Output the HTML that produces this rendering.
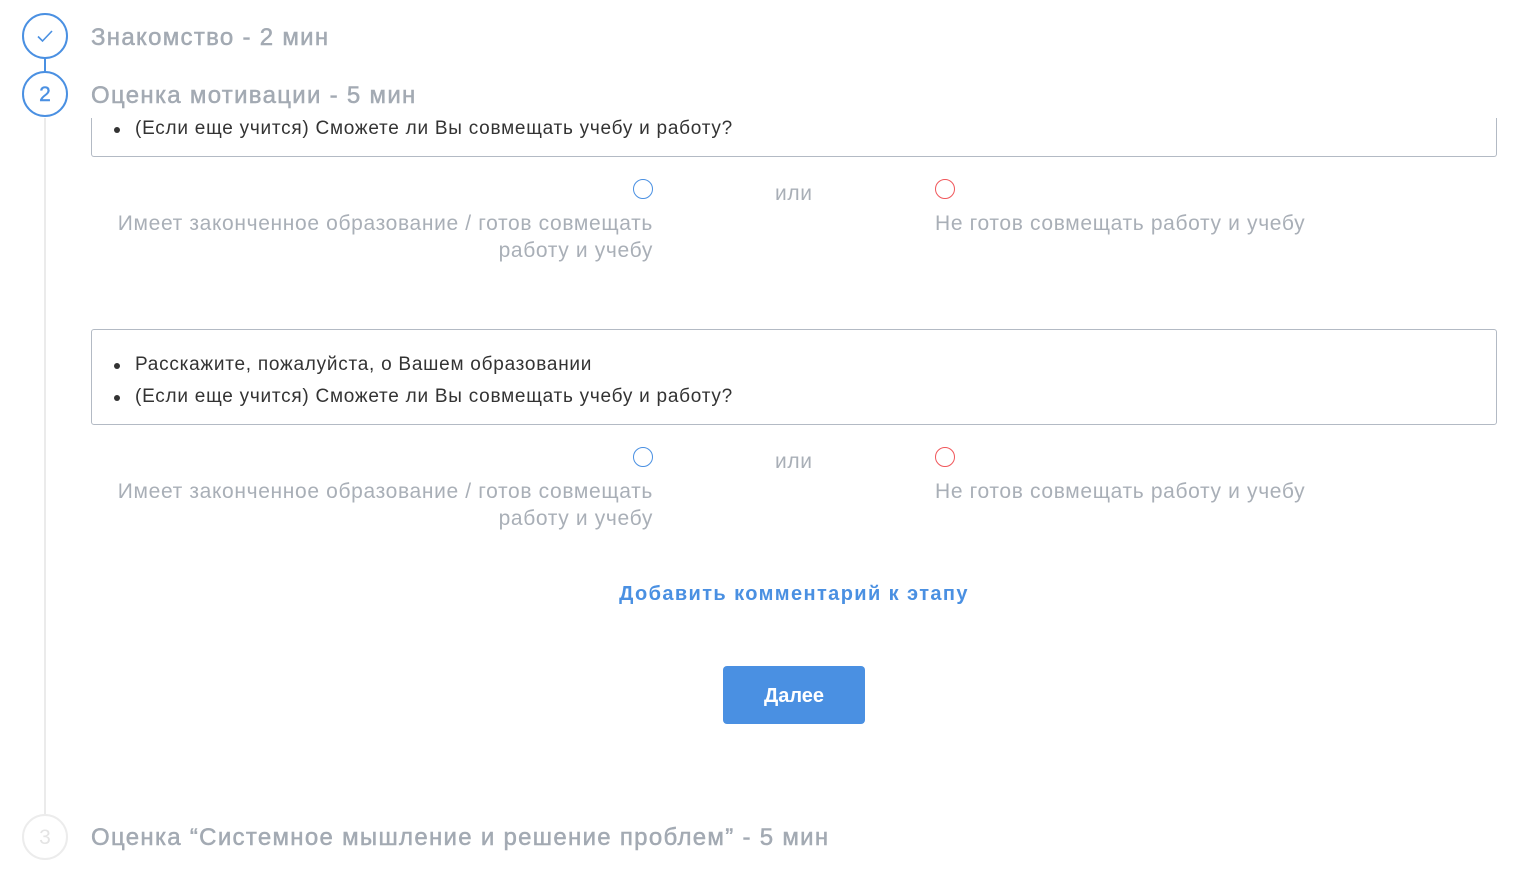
<!DOCTYPE html>
<html><head><meta charset="utf-8"><style>
*{margin:0;padding:0;box-sizing:border-box}
body{width:1514px;height:881px;background:#fff;position:relative;overflow:hidden;font-family:"Liberation Sans",sans-serif}
.a{position:absolute;white-space:nowrap}
.h{font-size:24px;color:#a3aab3;left:91px;letter-spacing:1.3px;-webkit-text-stroke:0.5px #a3aab3}
.circ{position:absolute;width:46px;height:46px;border-radius:50%;border:2px solid #4a90e2;background:#fff;text-align:center;color:#4a90e2;font-size:21px;line-height:43px;-webkit-text-stroke:0.4px #4a90e2}
.box{position:absolute;left:91px;width:1406px;border:1px solid #b3bac4;border-radius:3px;background:#fff}
.li{position:absolute;left:43px;font-size:19px;letter-spacing:0.75px;color:#333;white-space:nowrap}
.li:before{content:"";position:absolute;left:-21px;top:9px;width:6px;height:6px;border-radius:50%;background:#333}
.g{font-size:21px;letter-spacing:0.65px;color:#a9afb7;line-height:27px}
.r{position:absolute;width:20px;height:20px;border-radius:50%;border:1.5px solid #4a90e2}
.rr{border-color:#f0575b}
</style></head><body>
<div style="position:absolute;left:44px;top:118px;width:2px;height:700px;background:#ebebeb"></div>
<div style="position:absolute;left:44px;top:58px;width:2px;height:14px;background:#4a90e2"></div>
<div class="circ" style="left:22px;top:13px"><svg width="20" height="20" viewBox="0 0 20 20" style="margin-top:11px"><path d="M3 10.5l4.5 4.5L17 5" fill="none" stroke="#4a90e2" stroke-width="1.6"/></svg></div>
<div class="circ" style="left:22px;top:71px">2</div>
<div class="circ" style="left:22px;top:814px;border-color:#ececec;color:#e4e4e4;-webkit-text-stroke:0">3</div>
<div class="a h" style="top:24px">Знакомство - 2 мин</div>
<div class="a h" style="top:82px">Оценка мотивации - 5 мин</div>
<div class="a h" style="top:824px">Оценка “Системное мышление и решение проблем” - 5 мин</div>

<div class="box" style="top:118px;height:39px;border-top:none;border-radius:0 0 3px 3px"><div class="li" style="top:0px">(Если еще учится) Сможете ли Вы совмещать учебу и работу?</div></div>

<div class="box" style="top:329px;height:96px">
<div class="li" style="top:24px">Расскажите, пожалуйста, о Вашем образовании</div>
<div class="li" style="top:56px">(Если еще учится) Сможете ли Вы совмещать учебу и работу?</div></div>

<div class="r" style="left:633px;top:179px"></div>
<div class="r rr" style="left:935px;top:179px"></div>
<div class="a g" style="left:775px;top:180px">или</div>
<div class="a g" style="right:861px;top:210px;text-align:right">Имеет законченное образование / готов совмещать<br>работу и учебу</div>
<div class="a g" style="left:935px;top:210px">Не готов совмещать работу и учебу</div>

<div class="r" style="left:633px;top:447px"></div>
<div class="r rr" style="left:935px;top:447px"></div>
<div class="a g" style="left:775px;top:448px">или</div>
<div class="a g" style="right:861px;top:478px;text-align:right">Имеет законченное образование / готов совмещать<br>работу и учебу</div>
<div class="a g" style="left:935px;top:478px">Не готов совмещать работу и учебу</div>

<div class="a" style="left:0;width:1588px;text-align:center;top:583px;font-size:20px;font-weight:bold;letter-spacing:1.4px;color:#4a90e2">Добавить комментарий к этапу</div>
<div style="position:absolute;left:723px;top:666px;width:142px;height:58px;background:#4a90e2;border-radius:4px;color:#fff;font-size:20px;font-weight:bold;text-align:center;line-height:60px">Далее</div>
</body></html>
